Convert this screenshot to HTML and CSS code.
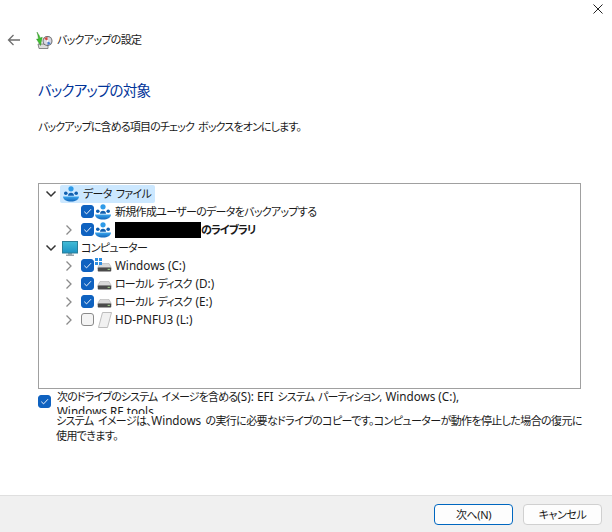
FILE: index.html
```html
<!DOCTYPE html>
<html lang="ja">
<head>
<meta charset="utf-8">
<title>バックアップの設定</title>
<link rel="stylesheet" href="styles.css">
</head>
<body>
<svg class="defs" width="0" height="0" aria-hidden="true">
  <defs>
    <symbol id="chev-down" viewBox="0 0 12 12"><path d="M1.500 3.500 6 8l4.500-4.500" fill="none" stroke="#333" stroke-width="1.500"/></symbol>
    <symbol id="chev-right" viewBox="0 0 12 12"><path d="M3.500 1.500 8 6l-4.500 4.500" fill="none" stroke="#8a8a8a" stroke-width="1.300"/></symbol>
    <symbol id="check" viewBox="0 0 12 12"><path d="M2.500 6.200 5 8.600 9.800 3.500" fill="none" stroke="#fff" stroke-width="1"/></symbol>
    <symbol id="users" viewBox="0 0 18 16">
      <circle cx="9" cy="2.800" r="2.600" fill="#2f9be8"/>
      <circle cx="3.800" cy="7.200" r="1.800" fill="#0f5fb0"/>
      <circle cx="14.200" cy="7.200" r="1.800" fill="#0f5fb0"/>
      <path d="M6 9.800c0-2 1.300-3 3-3s3 1 3 3z" fill="#0f5fb0"/>
      <path d="M1 10.500h16c0 3-3.600 5-8 5s-8-2-8-5z" fill="url(#bowl)"/>
    </symbol>
    <symbol id="drive" viewBox="0 0 16 10">
      <path d="M3 0.500h10l2.500 4.500H.5z" fill="#d9d9d9" stroke="#a8a8a8" stroke-width=".6"/>
      <rect x=".5" y="5" width="15" height="4.500" rx=".8" fill="#4a4a4a"/>
      <rect x="11.500" y="6.500" width="2.500" height="1.200" fill="#9fd08a"/>
    </symbol>
    <linearGradient id="bowl" x1="0" y1="0" x2="0" y2="1">
      <stop offset="0" stop-color="#3aa6ee"/>
      <stop offset="1" stop-color="#1166bb"/>
    </linearGradient>
    <linearGradient id="screen" x1="0" y1="0" x2="0" y2="1">
      <stop offset="0" stop-color="#43bcd6"/>
      <stop offset="1" stop-color="#1c93c4"/>
    </linearGradient>
  </defs>
</svg>
<div class="window">
  <div class="titlebar">
    <svg class="close" viewBox="0 0 10 10"><path d="M0.500 0.500l9 9M9.500 0.500l-9 9" stroke="#222" stroke-width="1" fill="none"/></svg>
  </div>
  <header class="nav">
    <svg class="back" viewBox="0 0 14 12"><path d="M13 6H1.500M6.500 1 1.500 6l5 5" fill="none" stroke="#6e6e6e" stroke-width="1.300"/></svg>
    <svg class="app-icon" viewBox="0 0 18 18">
      <path d="M2 13h10v4.500H3z" fill="#dcdcdc" stroke="#6f6f6f" stroke-width=".8"/>
      <circle cx="11.500" cy="10" r="5" fill="#6a6a6a"/>
      <circle cx="11.500" cy="10" r="4" fill="#d9d9e2"/>
      <path d="M11.500 10 8.200 7.700a4 4 0 0 1 3.300-1.700z" fill="#d8473f"/>
      <path d="M11.500 10l3.300 2.300a4 4 0 0 1-3.300 1.700z" fill="#4a7fd0"/>
      <circle cx="11.500" cy="10" r="1" fill="#fff"/>
      <path d="M1 1c1 2 2.600 3 3 6l2.300-.8-1.800 8.300-4-6.500 1.900.1C2.300 5.500 1.600 3.500 1 1z" fill="#3fc02f" stroke="#2a7d20" stroke-width=".4"/>
    </svg>
    <span class="nav-title">バックアップの設定</span>
  </header>
  <main class="content">
    <h1 class="heading">バックアップの対象</h1>
    <p class="lead">バックアップに含める項目のチェック ボックスをオンにします。</p>
    <div class="tree">
      <div class="row">
        <svg class="chev"><use href="#chev-down"/></svg>
        <span class="selected">
          <svg class="ico-users"><use href="#users"/></svg>
          <span class="label">データ ファイル</span>
        </span>
      </div>
      <div class="row lvl1">
        <span class="chev-space"></span>
        <span class="cb on"><svg><use href="#check"/></svg></span>
        <svg class="ico-users"><use href="#users"/></svg>
        <span class="label">新規作成ユーザーのデータをバックアップする</span>
      </div>
      <div class="row lvl1">
        <svg class="chev"><use href="#chev-right"/></svg>
        <span class="cb on"><svg><use href="#check"/></svg></span>
        <svg class="ico-users"><use href="#users"/></svg>
        <span class="label bold"><span class="redact"></span>のライブラリ</span>
      </div>
      <div class="row">
        <svg class="chev"><use href="#chev-down"/></svg>
        <svg class="ico-monitor" viewBox="0 0 16 15">
          <path d="M6 12h4v1.500h2V15H4v-1.500h2z" fill="#9aa7ae"/>
          <rect x=".5" y=".5" width="15" height="11.500" fill="url(#screen)" stroke="#2b7f97"/>
        </svg>
        <span class="label">コンピューター</span>
      </div>
      <div class="row lvl1">
        <svg class="chev"><use href="#chev-right"/></svg>
        <span class="cb on"><svg><use href="#check"/></svg></span>
        <span class="drive-wrap">
          <svg class="ico-win" viewBox="0 0 7 7"><path d="M0 0h3v3H0zM4 0h3v3H4zM0 4h3v3H0zM4 4h3v3H4z" fill="#2f8fe0"/></svg>
          <svg class="ico-drive"><use href="#drive"/></svg>
        </span>
        <span class="label up"><span class="lat">Windows (C:)</span></span>
      </div>
      <div class="row lvl1">
        <svg class="chev"><use href="#chev-right"/></svg>
        <span class="cb on"><svg><use href="#check"/></svg></span>
        <span class="drive-wrap"><svg class="ico-drive"><use href="#drive"/></svg></span>
        <span class="label up disk">ローカル ディスク <span class="lat">(D:)</span></span>
      </div>
      <div class="row lvl1">
        <svg class="chev"><use href="#chev-right"/></svg>
        <span class="cb on"><svg><use href="#check"/></svg></span>
        <span class="drive-wrap"><svg class="ico-drive"><use href="#drive"/></svg></span>
        <span class="label up disk">ローカル ディスク <span class="lat">(E:)</span></span>
      </div>
      <div class="row lvl1">
        <svg class="chev"><use href="#chev-right"/></svg>
        <span class="cb"></span>
        <span class="drive-wrap">
          <svg class="ico-removable" viewBox="0 0 14 16"><path d="M4.500 .5h9L9.500 15.500H.5z" fill="#f1f1f1" stroke="#bdbdbd"/></svg>
        </span>
        <span class="label up"><span class="lat">HD-PNFU3 (L:)</span></span>
      </div>
    </div>
    <div class="image-opt">
      <span class="cb on big"><svg><use href="#check"/></svg></span>
      <div class="image-text">次のドライブのシステム イメージを含める<span class="lat">(S): EFI</span> システム パーティション, <span class="lat">Windows (C:),</span><br><span class="lat">Windows RE tools</span></div>
    </div>
    <p class="image-note">システム イメージは、<span class="lat">Windows</span> の実行に必要なドライブのコピーです。コンピューターが動作を停止した場合の復元に<br>使用できます。</p>
  </main>
  <footer class="footer">
    <button class="btn primary" type="button">次へ(N)</button>
    <button class="btn" type="button">キャンセル</button>
  </footer>
</div>
</body>
</html>
```
FILE: styles.css
```css
* { box-sizing: border-box; }
html, body { margin: 0; padding: 0; height: 100%; }
body {
  background: #fff;
  color: #1a1a1a;
  font-family: "Noto Sans", "Noto Sans CJK JP", sans-serif;
  font-size: 11px;
  letter-spacing: -0.7px;
  word-spacing: 2px;
  font-feature-settings: "palt";
  overflow: hidden;
}
.lat { font-size: 11.700px; letter-spacing: 0; word-spacing: 0; }
.defs { position: absolute; }
.window { display: flex; flex-direction: column; height: 532px; width: 612px; }
.titlebar { height: 30px; display: flex; justify-content: flex-end; padding: 4px 9px 0 0; flex: none; }
.close { width: 10px; height: 10px; }
.nav { height: 20px; display: flex; align-items: center; padding-left: 7px; flex: none; }
.back { width: 14px; height: 12px; margin-right: 15px; }
.app-icon { width: 18px; height: 18px; margin-right: 3px; }
.nav-title { line-height: 20px; }
.content { flex: 1; padding: 0 31px 0 38px; min-height: 0; display: flex; flex-direction: column; }
.heading { margin: 29px 0 0; font-size: 14.500px; line-height: 22px; font-weight: 400; letter-spacing: -0.800px; color: #003399; }
.lead { margin: 17px 0 0; line-height: 18px; letter-spacing: -0.850px; }
.tree {
  margin-top: 47px;
  height: 206px;
  border: 1px solid #a0a0a0;
  padding-top: 1px;
  flex: none;
}
.row { height: 18px; display: flex; align-items: center; padding-left: 6px; }
.row.lvl1 { padding-left: 24px; }
.chev { width: 12px; height: 12px; flex: none; }
.chev-space { width: 12px; flex: none; }
.selected { display: flex; align-items: center; height: 18px; background: #cce8ff; border-radius: 2px; margin-left: 3px; padding: 0 4px 0 2px; }
.ico-users { width: 18px; height: 16px; flex: none; }
.ico-monitor { width: 16px; height: 15px; margin-left: 5px; flex: none; }
.label { margin-left: 3px; line-height: 18px; white-space: nowrap; }
.label.up { margin-bottom: 2px; }
.selected .label { margin-left: 3px; }
.label.disk { letter-spacing: -0.900px; }
.label.bold { font-weight: 700; display: flex; align-items: center; letter-spacing: -1px; }
.redact { display: inline-block; width: 86px; height: 16px; background: #000; }
.cb {
  width: 13px; height: 13px; margin-left: 6px; margin-bottom: 1px; border-radius: 3px;
  border: 1px solid #8a8a8a; background: #f4f4f4; flex: none; display: flex;
}
.cb.on { background: #0f62c0; border-color: #0f62c0; }
.cb svg { width: 11px; height: 11px; }
.cb.big { margin-left: 0; margin-bottom: 0; }
.drive-wrap { width: 18px; height: 16px; position: relative; flex: none; display: flex; align-items: flex-end; justify-content: flex-end; }
.ico-drive { width: 15px; height: 9px; margin-bottom: 2px; }
.ico-win { position: absolute; left: 1px; top: 0; width: 7px; height: 7px; }
.ico-removable { width: 14px; height: 16px; }
.image-opt { display: flex; align-items: center; height: 24px; flex: none; }
.image-text { margin-left: 6px; line-height: 15px; height: 25px; margin-top: 1px; overflow: hidden; flex: none; white-space: nowrap; letter-spacing: -0.850px; }
.image-note { margin: 0; padding-left: 18px; line-height: 15px; white-space: nowrap; letter-spacing: -0.620px; }
.footer {
  height: 37px; flex: none; background: #f0f0f0; border-top: 1px solid #dfdfdf;
  display: flex; justify-content: flex-end; align-items: center; gap: 10px; padding: 0 10px 0 0;
}
.btn {
  width: 79px; height: 21px; font: inherit; letter-spacing: -0.400px; font-feature-settings: "palt"; padding: 0;
  background: #fdfdfd; border: 1px solid #d0d0d0; border-radius: 4px; color: #1a1a1a;
}
.btn.primary { border: 1px solid #0067c0; }
```
